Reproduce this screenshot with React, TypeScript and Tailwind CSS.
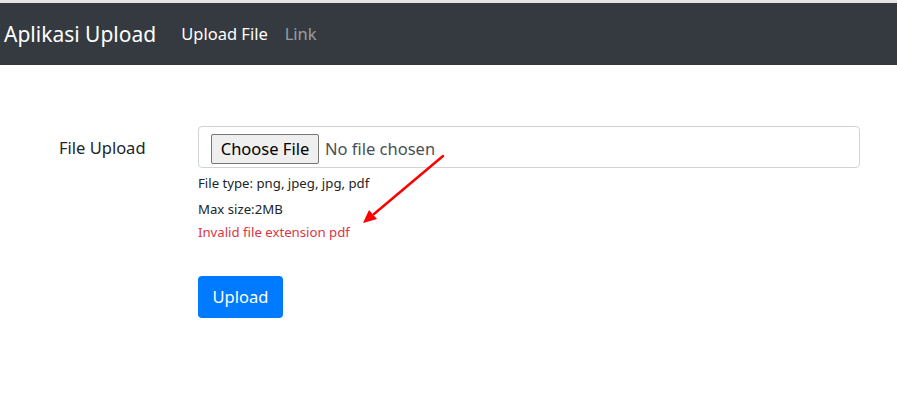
export default function App() {
  return (
    <div className="relative min-h-[416px] bg-white font-['Segoe_UI','Noto_Sans',sans-serif] text-[#212529]">
      <div className="h-[3px] bg-[#e4e4e4]" />
      <nav className="flex h-[62px] items-center bg-[#343a40] pl-[4px]">
        <span className="mr-[25px] text-[21px] leading-none text-white">Aplikasi Upload</span>
        <a className="mr-[17px] text-[16.5px] text-white">Upload File</a>
        <a className="text-[16.5px] text-white/50">Link</a>
      </nav>

      <form className="mt-[61px] flex pl-[59px] pr-[37px]">
        <label className="w-[139px] pt-[9px] text-[16.5px] leading-[26px]">File Upload</label>
        <div className="flex-1">
          <div className="flex h-[42px] items-start rounded-[4px] border border-[#ced4da] pl-[12px] pt-[7px]">
            <span className="flex h-[30px] w-[108px] items-center justify-center rounded-[2px] border border-[#767676] bg-[#efefef] text-[16.5px] text-black">
              Choose File
            </span>
            <span className="ml-[6px] text-[16.5px] leading-[30px] text-[#495057]">No file chosen</span>
          </div>
          <small className="mt-[5px] block text-[13.2px] leading-[21px]">File type: png, jpeg, jpg, pdf</small>
          <small className="mt-[5px] block text-[13.2px] leading-[21px]">Max size:2MB</small>
          <small className="mt-[2px] block text-[13.2px] leading-[21px] text-[#dc3545]">
            Invalid file extension pdf
          </small>
          <button
            type="button"
            className="mt-[33px] h-[42px] w-[85px] rounded-[4px] bg-[#007bff] text-[16.5px] text-white"
          >
            Upload
          </button>
        </div>
      </form>

      {/* annotation arrow drawn over the page */}
      <svg className="pointer-events-none absolute left-0 top-0" width="897" height="416">
        <line x1="443" y1="156" x2="374" y2="214" stroke="#f00" strokeWidth="2.5" strokeLinecap="round" />
        <polygon points="363,223 369,210 377,219" fill="#f00" />
      </svg>
    </div>
  );
}
